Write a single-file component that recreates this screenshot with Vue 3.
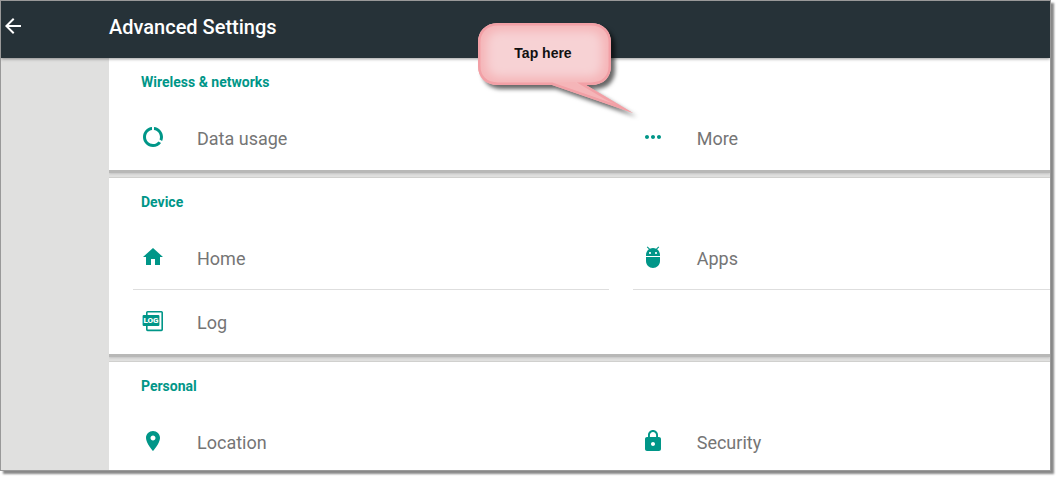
<script setup>
const icons = {
  data: 'M13 2.05v3.03c3.39.49 6 3.39 6 6.92 0 .9-.18 1.75-.48 2.54l2.6 1.53c.56-1.24.88-2.62.88-4.07 0-5.18-3.95-9.45-9-9.95zM12 19c-3.87 0-7-3.13-7-7 0-3.53 2.61-6.43 6-6.92V2.05c-5.06.5-9 4.76-9 9.95 0 5.52 4.47 10 9.99 10 3.31 0 6.24-1.61 8.06-4.09l-2.6-1.53C16.17 17.98 14.21 19 12 19z',
  more: 'M6 10c-1.1 0-2 .9-2 2s.9 2 2 2 2-.9 2-2-.9-2-2-2zm12 0c-1.1 0-2 .9-2 2s.9 2 2 2 2-.9 2-2-.9-2-2-2zm-6 0c-1.1 0-2 .9-2 2s.9 2 2 2 2-.9 2-2-.9-2-2-2z',
  home: 'M10 20v-6h4v6h5v-8h3L12 3 2 12h3v8z',
  apps: 'M5 16c0 3.87 3.13 7 7 7s7-3.13 7-7v-4H5v4zM16.12 4.37l2.1-2.1-.82-.83-2.3 2.31C14.16 3.28 13.12 3 12 3s-2.16.28-3.09.75L6.6 1.44l-.82.83 2.1 2.1C6.14 5.64 5 7.68 5 10v1h14v-1c0-2.32-1.14-4.36-2.88-5.63zM9 9c-.55 0-1-.45-1-1s.45-1 1-1 1 .45 1 1-.45 1-1 1zm6 0c-.55 0-1-.45-1-1s.45-1 1-1 1 .45 1 1-.45 1-1 1z',
  location: 'M12 2C8.13 2 5 5.13 5 9c0 5.25 7 13 7 13s7-7.75 7-13c0-3.87-3.13-7-7-7zm0 9.5c-1.38 0-2.5-1.12-2.5-2.5s1.12-2.5 2.5-2.5 2.5 1.12 2.5 2.5-1.12 2.5-2.5 2.5z',
  security: 'M18 8h-1V6c0-2.76-2.24-5-5-5S7 3.24 7 6v2H6c-1.1 0-2 .9-2 2v10c0 1.1.9 2 2 2h12c1.1 0 2-.9 2-2V10c0-1.1-.9-2-2-2zm-6 9c-1.1 0-2-.9-2-2s.9-2 2-2 2 .9 2 2-.9 2-2 2zm3.1-9H8.9V6c0-1.71 1.39-3.1 3.1-3.1s3.1 1.39 3.1 3.1v2z',
}

const bubble = 'M20 0H113C126 0 133 9 133 19V43C133 54 126 62 113 62H108L155 90L74 62H20C7 62 0 54 0 43V19C0 9 7 0 20 0Z'

const sections = [
  {
    title: 'Wireless & networks',
    items: [
      { label: 'Data usage', icon: 'data' },
      { label: 'More', icon: 'more' },
    ],
  },
  {
    title: 'Device',
    items: [
      { label: 'Home', icon: 'home', divider: true },
      { label: 'Apps', icon: 'apps', divider: true },
      { label: 'Log', icon: 'log' },
    ],
  },
  {
    title: 'Personal',
    items: [
      { label: 'Location', icon: 'location' },
      { label: 'Security', icon: 'security' },
    ],
  },
]
</script>

<template>
  <div class="page">
    <div class="frame">
      <header class="bar">
        <button class="back" type="button" aria-label="Back">
          <svg viewBox="0 0 24 24" aria-hidden="true">
            <path d="M20 11H7.83l5.59-5.59L12 4l-8 8 8 8 1.41-1.41L7.83 13H20v-2z" />
          </svg>
        </button>
        <h1>Advanced Settings</h1>
      </header>

      <main class="content">
        <section v-for="section in sections" :key="section.title" class="card">
          <h2>{{ section.title }}</h2>
          <div class="grid">
            <a
              v-for="item in section.items"
              :key="item.label"
              class="item"
              :class="{ divider: item.divider }"
              href="#"
            >
              <svg class="icon" viewBox="0 0 24 24" aria-hidden="true">
                <g v-if="item.icon === 'log'">
                  <rect class="sheet" x="5.8" y="2.8" width="15.4" height="18.6" rx="0.8" />
                  <rect x="1.6" y="6" width="16.8" height="11" rx="1" />
                  <text x="10" y="14" text-anchor="middle">LOG</text>
                </g>
                <path v-else :d="icons[item.icon]" />
              </svg>
              <span>{{ item.label }}</span>
            </a>
          </div>
        </section>
      </main>
    </div>

    <div class="callout">
      <svg viewBox="0 0 170 104" aria-hidden="true">
        <defs>
          <clipPath id="bubble-clip">
            <path :d="bubble" />
          </clipPath>
          <filter id="glow" x="-20%" y="-30%" width="140%" height="160%">
            <feGaussianBlur stdDeviation="5" />
          </filter>
        </defs>
        <g class="bubble">
          <path class="body" :d="bubble" />
        </g>
        <g clip-path="url(#bubble-clip)">
          <rect class="inner" x="9" y="8" width="115" height="46" rx="12" filter="url(#glow)" />
          <path class="edge" :d="bubble" />
          <path class="body" d="M78 60L97 59L106 68L140 82Z" />
        </g>
      </svg>
      <span>Tap here</span>
    </div>
  </div>
</template>

<style>
body {
  background: #fff;
}
</style>

<style scoped>
.page {
  position: relative;
  box-sizing: border-box;
  height: 100vh;
  padding: 0 8px 8px 0;
  overflow: hidden;
  font-family: Roboto, "Liberation Sans", sans-serif;
}

.frame {
  box-sizing: border-box;
  height: 100%;
  overflow: hidden;
  border: 1px solid #999;
  background: #e0e0df;
  box-shadow: 3px 3px 2px #888;
}

.bar {
  position: relative;
  z-index: 1;
  display: flex;
  height: 57px;
  background: #263238;
  box-shadow: 0 1px 3px rgba(0, 0, 0, 0.4);
}

.back {
  display: flex;
  align-items: flex-start;
  width: 108px;
  padding: 13px 0 0;
  border: 0;
  background: none;
  cursor: pointer;
}

.back svg {
  width: 24px;
  height: 24px;
  fill: #fff;
}

h1 {
  margin: 0;
  padding-top: 14px;
  font-size: 20px;
  font-weight: 500;
  line-height: 24px;
  color: #fff;
}

.content {
  display: flex;
  flex-direction: column;
  gap: 8px;
  margin-left: 108px;
}

.card {
  background: #fff;
  box-shadow: 0 -1px 0 #d0d0ce, 0 3px 0 #b8b8b7, 0 4px 2px #c4c4c3;
  clip-path: inset(-1px 0 -7px 0);
}

h2 {
  margin: 0;
  padding: 12px 32px;
  font-size: 14px;
  font-weight: 700;
  line-height: 24px;
  color: #009688;
}

.grid {
  display: grid;
  grid-template-columns: 57fr 50fr;
  column-gap: 24px;
  padding-left: 24px;
}

.item {
  display: flex;
  align-items: flex-start;
  gap: 32px;
  box-sizing: border-box;
  height: 64px;
  padding: 19px 8px 0;
  border-bottom: 1px solid transparent;
  font-size: 18px;
  line-height: 28px;
  color: #757575;
  text-decoration: none;
}

.item.divider {
  border-bottom-color: #dedede;
}

.icon {
  flex: none;
  width: 24px;
  height: 24px;
  fill: #009688;
}

.icon .sheet {
  fill: none;
  stroke: #009688;
  stroke-width: 1.6;
}

.icon text {
  fill: #fff;
  font-size: 8px;
  font-weight: 900;
}

.callout {
  position: absolute;
  z-index: 2;
  top: 23px;
  left: 478px;
  width: 170px;
  height: 104px;
  pointer-events: none;
}

.callout svg {
  display: block;
  width: 100%;
  height: 100%;
  overflow: visible;
}

.callout span {
  position: absolute;
  top: 20px;
  left: 0;
  width: 130px;
  font-family: "Liberation Sans", Arial, sans-serif;
  font-size: 14px;
  font-weight: 700;
  line-height: 20px;
  text-align: center;
  color: #111;
}

.bubble {
  filter: drop-shadow(4px 4px 2px rgba(0, 0, 0, 0.6));
}

.body {
  fill: #f5b5b8;
}

.inner {
  fill: #f7d2d4;
}

.edge {
  fill: none;
  stroke: #f2a0a6;
  stroke-width: 5;
}
</style>
